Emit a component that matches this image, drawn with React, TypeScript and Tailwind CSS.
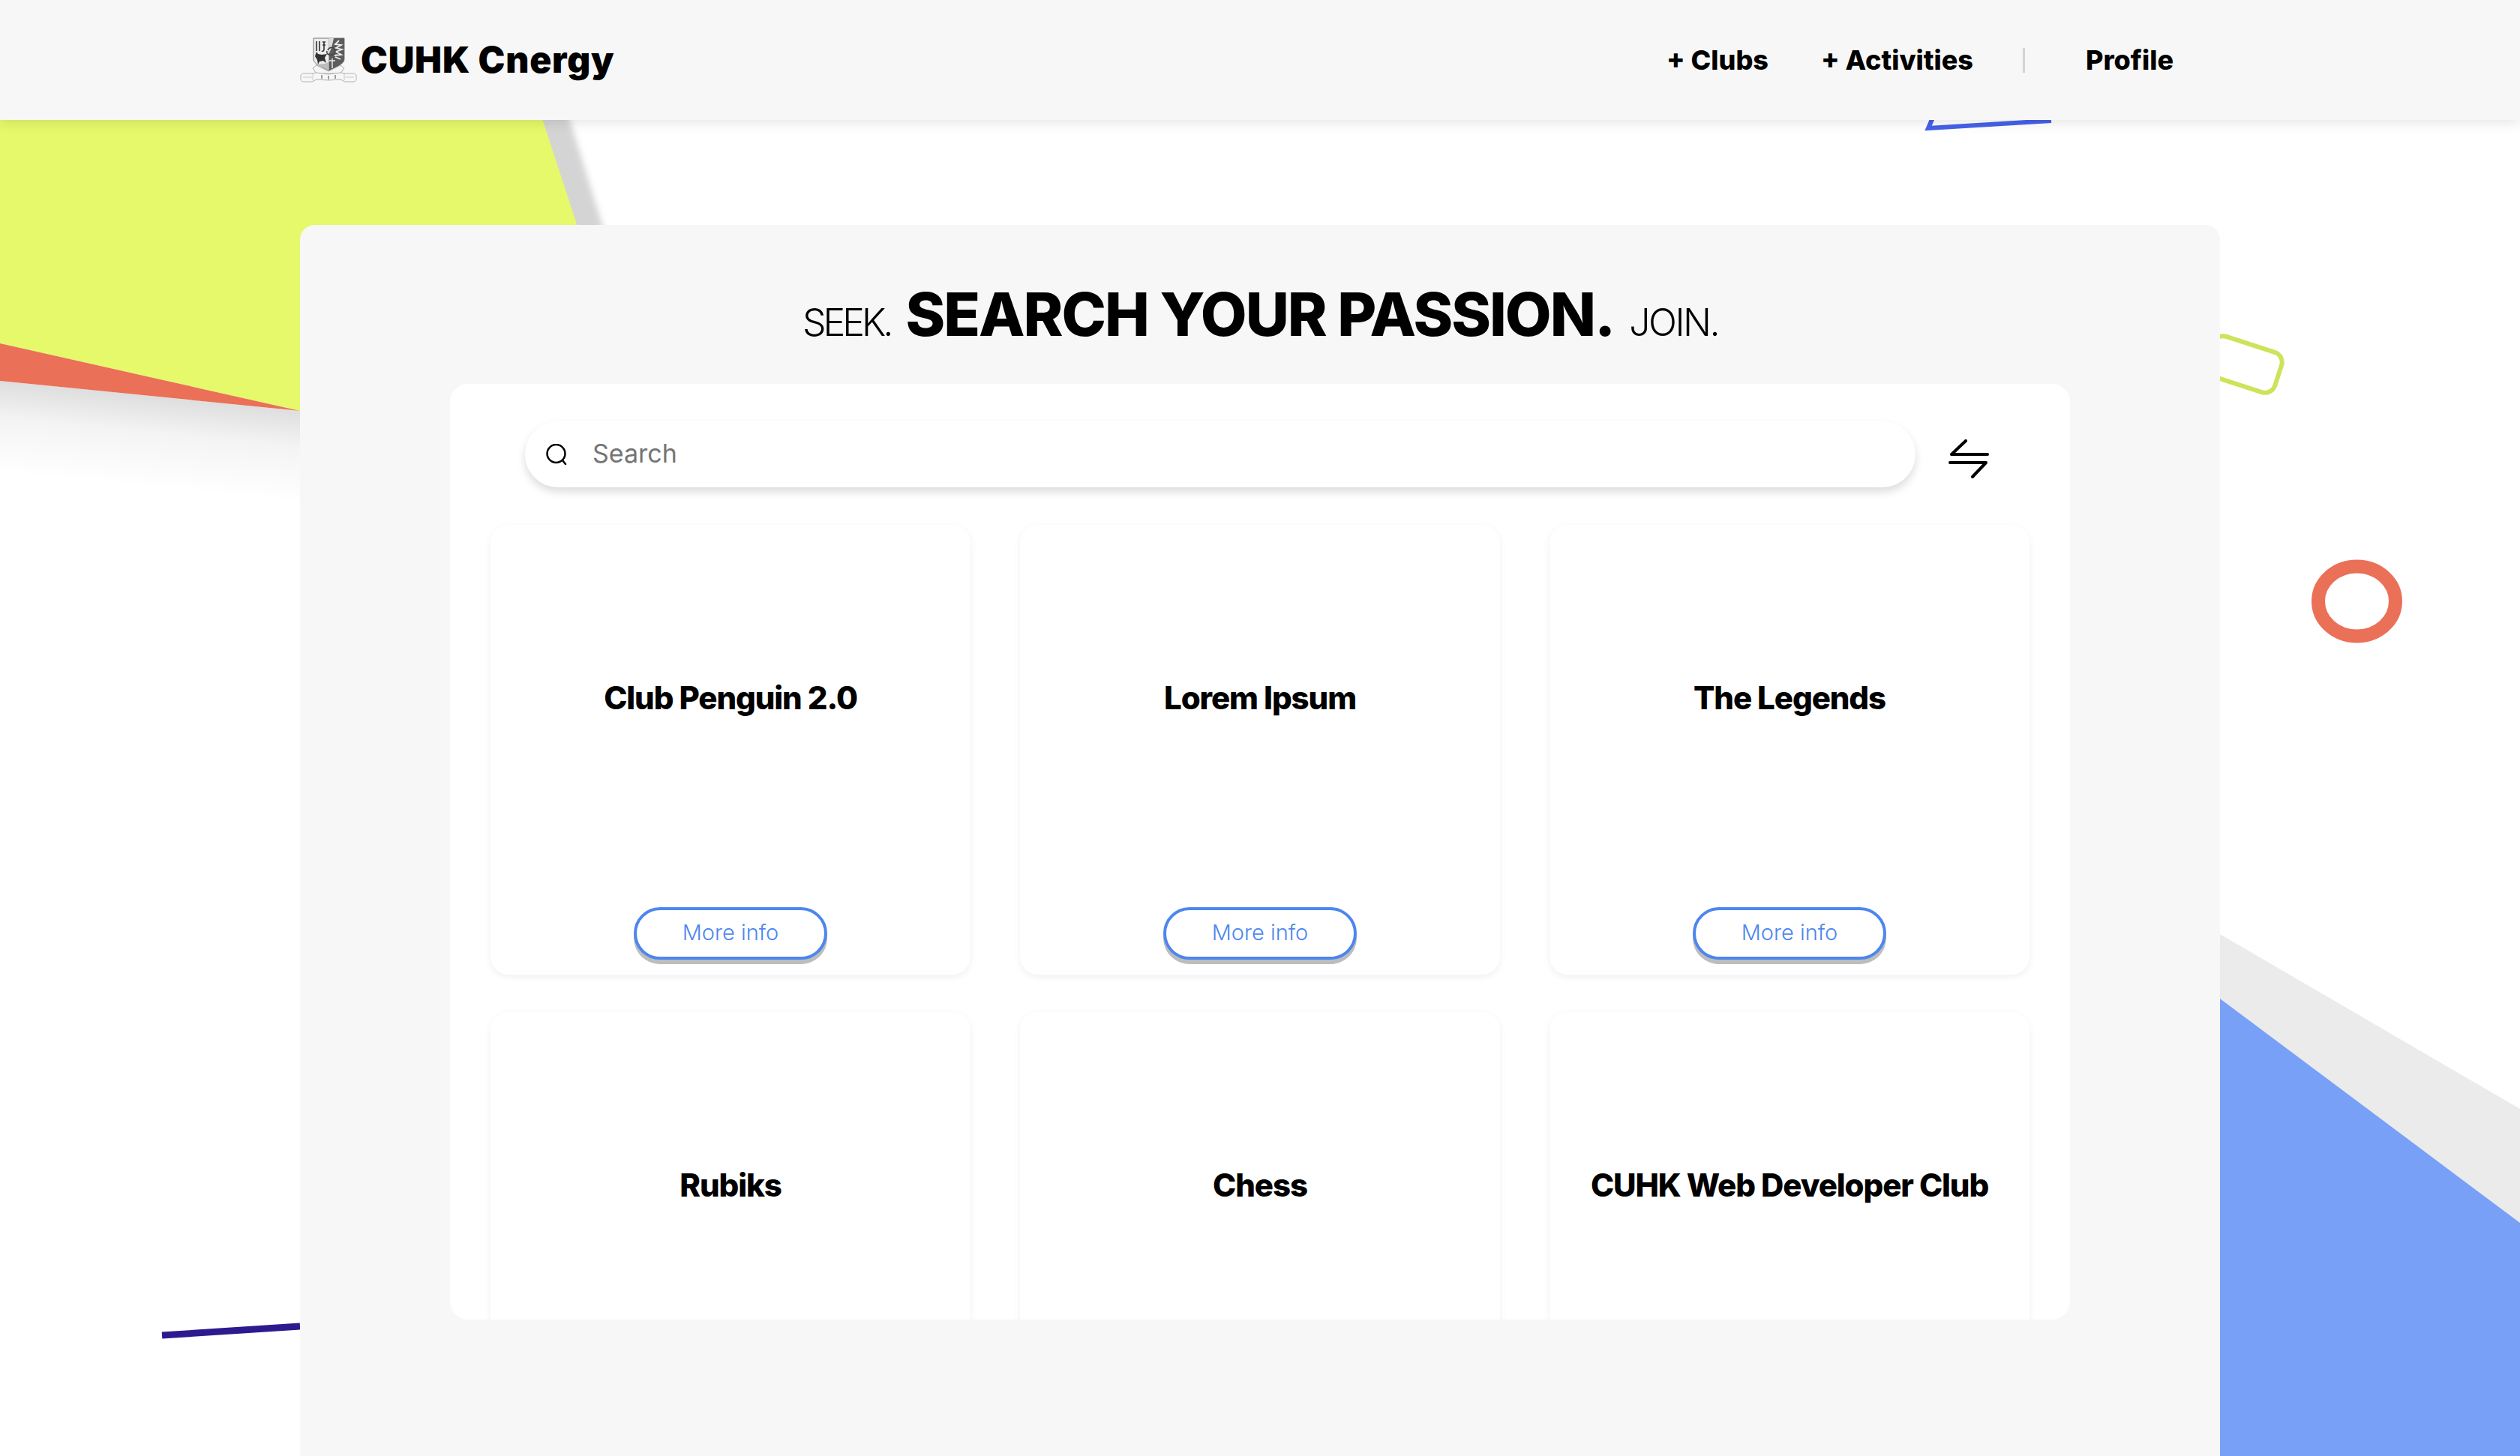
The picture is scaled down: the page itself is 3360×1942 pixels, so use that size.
// App.tsx
import React from "react";

const clubs = [
  { name: "Club Penguin 2.0" },
  { name: "Lorem Ipsum" },
  { name: "The Legends" },
  { name: "Rubiks" },
  { name: "Chess" },
  { name: "CUHK Web Developer Club" },
];

const font = "font-['Inter','Liberation_Sans',sans-serif]";

function Crest() {
  return (
    <svg viewBox="0 0 76 60" className="h-[60px] w-[76px] shrink-0" aria-hidden="true">
      <defs>
        <filter id="crest-soft">
          <feGaussianBlur stdDeviation="0.35" />
        </filter>
      </defs>
      <g filter="url(#crest-soft)">
        {/* shield */}
        <path d="M18 1h41v28c0 6-10 10-20.500 15C28 39 18 35 18 29Z" fill="#ececec" stroke="#777" strokeWidth="1" />
        <path d="M38.500 1H59v28c0 6-10 10-20.500 15Z" fill="#5c5c5c" />
        <path d="M38.500 1H45l-3 13-3.500 8Z" fill="#dcdcdc" />
        {/* left quarter, letters and deer */}
        <path d="M22 5v13M26 5v13M30 6h4M30 10h4M32 6v10c0 2-2 3-3 2" stroke="#333" strokeWidth="1.600" fill="none" />
        <path d="M20 25l2-6 2 3 5 1 7-1-3 5 2 7-4-3-5 1-2 4-1-6Z" fill="#333" />
        <path d="M20 36l18 7V33l-5 2Z" fill="#bdbdbd" />
        {/* right quarter, wing */}
        <path d="M52 4l-5 5 8 1-7 4 8 2-8 3 7 4-9 1M47 26l7 3" stroke="#ededed" strokeWidth="1.800" fill="none" />
        <path d="M37 17a5 5 0 1 1 3 6c-3 0-5-2-4-5" stroke="#444" strokeWidth="1.600" fill="none" />
        <path d="M39 31h8M43 28v13" stroke="#e8e8e8" strokeWidth="1.500" fill="none" />
        {/* scroll */}
        <path d="M17 41l5-4 16 8 16-8 5 4-5 7H22Z" fill="#f5f5f5" stroke="#a3a3a3" strokeWidth="0.900" />
        <path d="M1 51c0-2 2-3 4-3h10l7-1 16 2 16-2 7 1h10c2 0 4 1 4 3v5c0 2-2 3-4 3H60l-6-3-16 1-16-1-6 3H5c-2 0-4-1-4-3Z" fill="#f7f7f7" stroke="#a8a8a8" strokeWidth="0.900" />
        <path d="M4 53h12M60 53h12M17 47v10M59 47v10" stroke="#bdbdbd" strokeWidth="0.800" />
        <path d="M29 50v5M38 51v5M47 50v5" stroke="#6f6f6f" strokeWidth="1.300" />
      </g>
    </svg>
  );
}

function Backdrop() {
  return (
    <svg viewBox="0 0 3360 1942" className="absolute inset-0 h-[1942px] w-[3360px]" aria-hidden="true">
      <defs>
        <filter id="soft" x="-20%" y="-20%" width="140%" height="140%">
          <feGaussianBlur stdDeviation="4" />
        </filter>
        <linearGradient id="fade" gradientUnits="userSpaceOnUse" x1="200" y1="528" x2="188" y2="650">
          <stop offset="0" stopColor="#000" stopOpacity="0.13" />
          <stop offset="0.4" stopColor="#000" stopOpacity="0.045" />
          <stop offset="1" stopColor="#000" stopOpacity="0" />
        </linearGradient>
      </defs>

      {/* top left shapes */}
      <polygon points="0,508 400,548 400,680 0,640" fill="url(#fade)" />
      <polygon points="680,100 741,100 817,345 770,345" fill="#d4d4d4" filter="url(#soft)" />
      <polygon points="0,100 704,100 784,345 400,345 400,548 0,458" fill="#e5f96a" />
      <polygon points="0,458 400,548 0,508" fill="#ea7058" />

      {/* bottom right shapes */}
      <polygon points="2960,1246 3360,1479 3360,1942 2960,1942" fill="#ebebeb" />
      <polygon points="2960,1332 3360,1631 3360,1942 2960,1942" fill="#78a0f7" />

      {/* outlines */}
      <rect x="2944" y="458" width="96" height="56" rx="14" fill="none" stroke="#cde35a" strokeWidth="6" transform="rotate(18 2992 486)" />
      <ellipse cx="3142.500" cy="802" rx="51.500" ry="46.500" fill="none" stroke="#ea7058" strokeWidth="18" />
      <path d="M2580 150L2571 171L2735 161" fill="none" stroke="#4561ea" strokeWidth="6" />
      <line x1="216" y1="1781" x2="400" y2="1769" stroke="#2e1a8e" strokeWidth="9" />
    </svg>
  );
}

function ClubCard({ name }: { name: string }) {
  return (
    <div className="flex h-[600px] flex-col items-center rounded-[24px] bg-white pt-[207px] pb-[20px] shadow-[0_3px_8px_rgba(90,90,170,0.09)]">
      <h3 className={`${font} text-[42px] leading-[48px] font-extrabold tracking-[-1.1px] whitespace-nowrap text-black`}>
        {name}
      </h3>
      <button className="mt-auto flex h-[70px] w-[258px] shrink-0 items-center justify-center rounded-full border-4 border-[#4d86ee] bg-white pb-[3px] text-[29px] font-light text-[#4d86ee] shadow-[0_6px_0_#bdbdbd]">
        More info
      </button>
    </div>
  );
}

export default function App() {
  return (
    <div className={`${font} relative h-[1942px] w-[3360px] overflow-hidden bg-white`}>
      <Backdrop />

      <header className="absolute inset-x-0 top-0 z-10 flex h-[160px] items-center justify-between bg-[#f7f7f7] pr-[465px] pl-[400px] shadow-[0_4px_16px_rgba(0,0,0,0.1)]">
        <div className="flex items-center gap-[5px]">
          <Crest />
          <span className="text-[48px] leading-none font-black tracking-[0.8px] text-black">
            CUHK Cnergy
          </span>
        </div>
        <nav className="flex items-center text-[36px] leading-none font-extrabold text-black">
          <a className="w-[206px]">+ Clubs</a>
          <a className="w-[269px]">+ Activities</a>
          <span className="mr-[81px] h-[33px] w-[3px] bg-[#d3d3d3]" />
          <a className="w-[114px] whitespace-nowrap">Profile</a>
        </nav>
      </header>

      <main className="relative mx-[400px] mt-[300px] h-[1642px] rounded-t-[20px] bg-[#f7f7f7]">
        <h1 className="ml-[1px] flex h-[212px] items-baseline justify-center gap-[20px] pt-[79px] leading-none text-black">
          <span className="text-[50px] font-light tracking-[-4px]">SEEK.</span>
          <span className="text-[80px] font-extrabold tracking-[-2px]">SEARCH YOUR PASSION.</span>
          <span className="text-[50px] font-light tracking-[-2.5px]">JOIN.</span>
        </h1>

        <section className="mx-[200px] h-[1248px] overflow-hidden rounded-[24px] bg-white px-[54px]">
          <div className="mt-[50px] flex items-center">
            <div className="ml-[46px] flex h-[88px] w-[1854px] items-center gap-[34px] rounded-full bg-white pl-[28px] shadow-[0_6px_12px_rgba(0,0,0,0.14)]">
              <svg viewBox="0 0 28 28" className="h-[28px] w-[28px]" fill="none" stroke="#000" strokeWidth="2.500" aria-hidden="true">
                <circle cx="13.500" cy="13" r="12" />
                <path d="M22 22l4 5" strokeLinecap="round" />
              </svg>
              <span className="pb-[3px] text-[34px] text-[#757575]">Search</span>
            </div>
            <svg viewBox="0 0 54 52" className="mt-[12px] ml-[44px] h-[52px] w-[54px]" fill="none" stroke="#000" strokeWidth="4" strokeLinecap="round" strokeLinejoin="round" aria-hidden="true">
              <path d="M23 2L4 20H52" />
              <path d="M2 31H50L32 50" />
            </svg>
          </div>

          <div className="mt-[50px] grid grid-cols-3 gap-x-[66px] gap-y-[50px]">
            {clubs.map((club) => (
              <ClubCard key={club.name} name={club.name} />
            ))}
          </div>
        </section>
      </main>
    </div>
  );
}
